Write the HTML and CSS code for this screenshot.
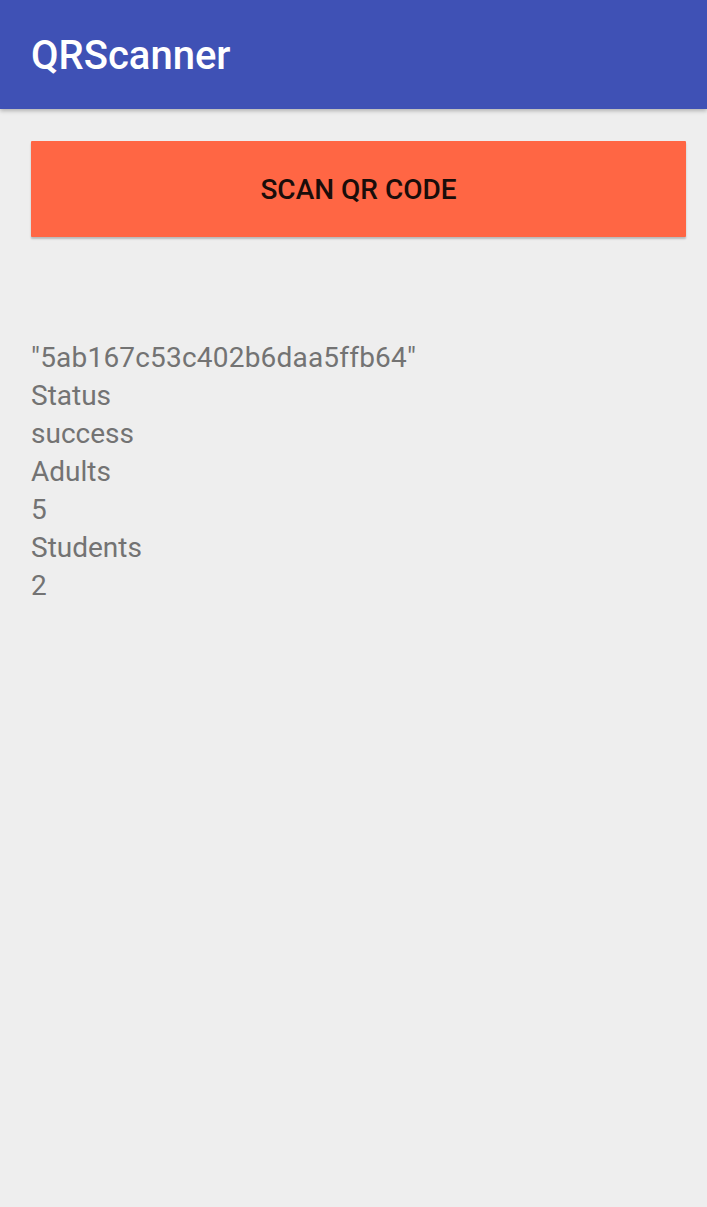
FILE: index.html
```html
<!DOCTYPE html>
<html>
<head>
<meta charset="utf-8">
<link rel="stylesheet" href="styles.css">
</head>
<body>
<header class="appbar"><h1 class="title">QRScanner</h1></header>
<main class="content">
  <button class="scan-btn">SCAN QR CODE</button>
  <div class="result">
    <div class="line hash">"5ab167c53c402b6daa5ffb64"</div>
    <div class="line">Status</div>
    <div class="line">success</div>
    <div class="line">Adults</div>
    <div class="line">5</div>
    <div class="line">Students</div>
    <div class="line">2</div>
  </div>
</main>
</body>
</html>
```
FILE: styles.css
```css
html, body {
  margin: 0;
  padding: 0;
  height: 100%;
}
body {
  background: #eeeeee;
  font-family: Roboto, "Noto Sans", sans-serif;
}
.appbar {
  height: 109px;
  background: #3f51b5;
  box-shadow: 0 2px 4px rgba(0,0,0,0.25);
  display: flex;
  align-items: center;
  padding-left: 31px;
  position: relative;
  z-index: 1;
}
.title {
  margin: 0;
  color: #ffffff;
  font-size: 40px;
  font-weight: 500;
  padding-top: 1px;
}
.content {
  padding: 32px 21px 0 31px;
}
.scan-btn {
  display: block;
  width: 655px;
  height: 96px;
  border: none;
  background: #ff6644;
  color: #1a0d0a;
  font-family: Roboto, sans-serif;
  font-weight: 500;
  font-size: 28px;
  box-shadow: 0 2px 2px rgba(0,0,0,0.22);
  border-radius: 1px;
  padding: 0;
}
.result {
  margin-top: 102px;
  color: #737373;
  font-size: 28px;
  line-height: 38px;
}
.hash {
  letter-spacing: 0.2px;
}
```
